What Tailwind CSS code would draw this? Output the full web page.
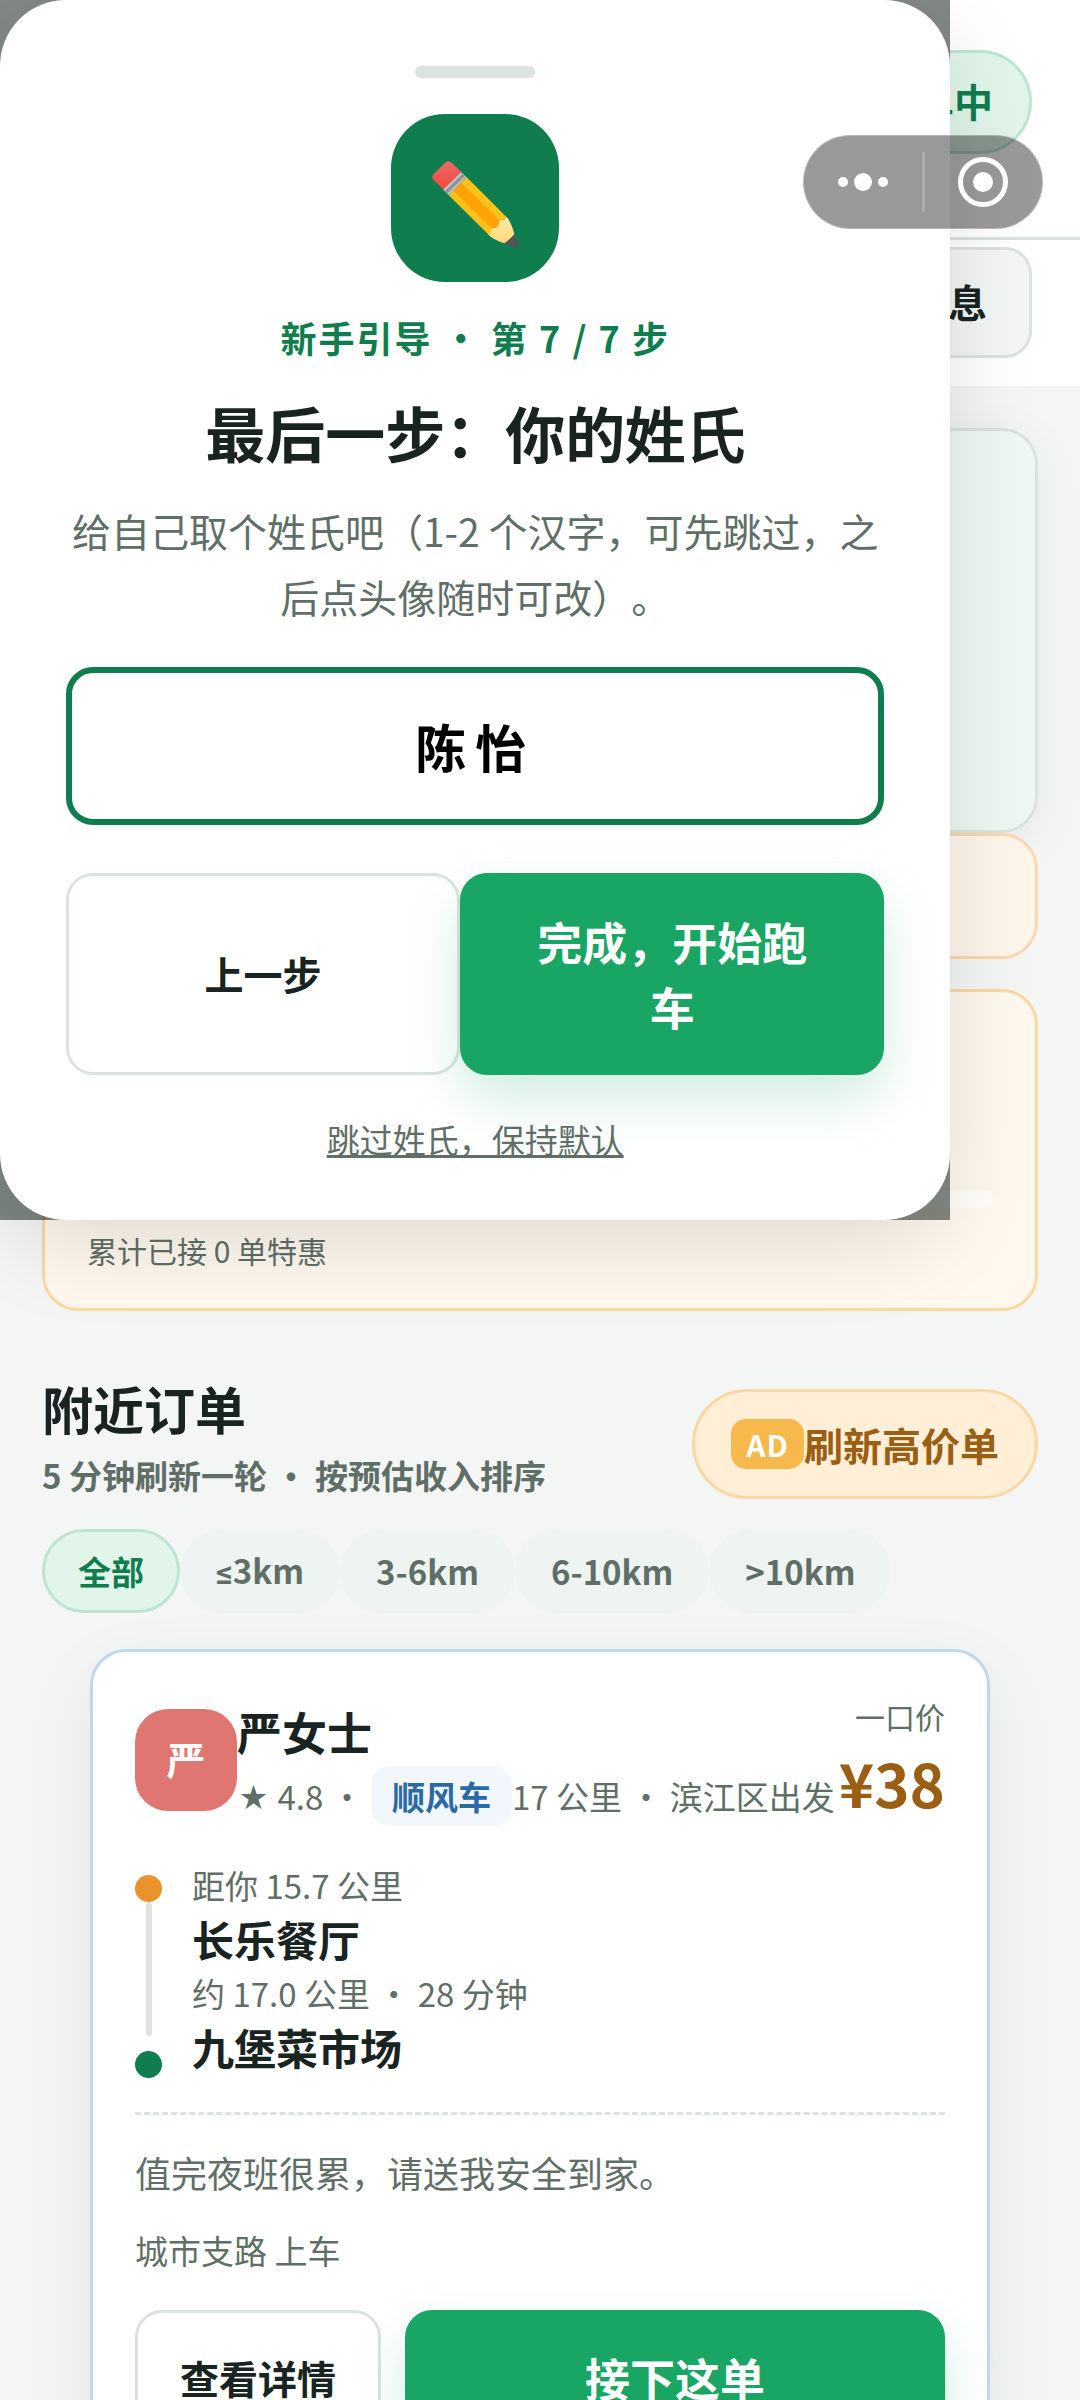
<!DOCTYPE html>
<html lang="zh-CN">
<head>
<meta charset="utf-8">
<meta name="viewport" content="width=device-width, initial-scale=1">
<title>附近订单</title>
<script src="https://cdn.jsdelivr.net/npm/@tailwindcss/browser@4"></script>
</head>
<body class="bg-[#f4f6f5] font-['Noto_Sans_CJK_SC',sans-serif] text-[#182322] [text-spacing-trim:space-all]">
<div class="relative h-screen overflow-hidden">

  <header class="flex h-60 items-start justify-end border-b-3 border-[#dbe3df] bg-white px-12 pt-[50px]">
    <button class="h-[104px] rounded-full border-3 border-[#bfe5d2] bg-[#e1f5ea] px-9 pb-1 text-[39px] leading-[56px] font-bold text-[#0f7d4d]">接单中</button>
  </header>
  <nav class="flex justify-end bg-white px-12 pt-[7px] pb-7">
    <button class="h-[111px] rounded-[27px] border-3 border-[#dbe3df] bg-[#f4f6f5] px-[42px] pb-1 text-[39px] leading-[56px] font-bold">消息</button>
  </nav>

  <main class="px-[42px] pt-[42px]">
    <section class="h-[405px] rounded-[36px] border-3 border-[#d9e4df] bg-linear-to-r from-[#e1f5ea] to-[#eff7f3] shadow-[0_12px_54px_rgba(24,35,34,0.06)]"></section>
    <section class="h-[126px] rounded-[36px] border-3 border-[#fad8b0] bg-[#fff6eb]"></section>
    <section class="mt-[30px] flex h-[322px] flex-col justify-end rounded-[36px] border-3 border-[#fbd9a3] bg-[#fff8ee] px-[42px] pb-9">
      <div class="h-[18px] rounded-full bg-white/70"></div>
      <p class="mt-5 text-[30px] leading-[44px] text-[#5f6f68]">累计已接 0 单特惠</p>
    </section>

    <div class="mt-16 flex items-end justify-between">
      <div>
        <h2 class="text-[51px] leading-[66px] font-bold">附近订单</h2>
        <p class="mt-2.5 text-[33px] leading-[48px] font-bold text-[#5f6f68]">5 分钟刷新一轮 · 按预估收入排序</p>
      </div>
      <button class="flex h-[110px] items-center rounded-full border-3 border-[#fbd7a4] bg-[#ffefd6] px-9 text-[39px] leading-[56px] font-bold text-[#9b5f13]">
        <span class="flex h-[50px] items-center rounded-[15px] bg-[#f7b84c] px-[15px] text-[30px] leading-[44px] tracking-[1px] text-white">AD</span>刷新高价单
      </button>
    </div>

    <div class="mt-[30px] flex text-[33px] leading-[48px] font-bold text-[#5f6f68]">
      <button class="h-[84px] rounded-full border-3 border-[#bfe5d2] bg-[#e1f5ea] px-[33px] text-[#0f7d4d]">全部</button>
      <button class="h-[84px] rounded-full bg-[#edf4f2] px-9"><span class="font-[Roboto]">≤</span>3km</button>
      <button class="h-[84px] rounded-full bg-[#edf4f2] px-9">3-6km</button>
      <button class="h-[84px] rounded-full bg-[#edf4f2] px-9">6-10km</button>
      <button class="h-[84px] rounded-full bg-[#edf4f2] px-9">&gt;10km</button>
    </div>

    <article class="mx-12 mt-9 rounded-[36px] border-3 border-[#bfd8ee] bg-white px-[42px] pt-[42px] pb-[42px] shadow-[0_24px_72px_rgba(24,35,34,0.07)]">
      <div class="flex items-center justify-between">
        <div class="flex items-center whitespace-nowrap">
          <div class="grid size-[102px] shrink-0 place-items-center rounded-[33px] bg-[#df7672] pb-1 text-[39px] leading-[56px] font-bold text-white">严</div>
          <div class="pt-2">
            <h3 class="text-[45px] leading-[60px] font-bold">严女士</h3>
            <p class="mt-1 flex h-[60px] items-center text-[33px] leading-[48px] text-[#5f6f68]"><span class="w-[33px] text-center text-[27px]">★</span><span class="whitespace-pre"> 4.8 · </span><span class="rounded-[18px] bg-[#f2f7fe] px-[21px] py-1.5 font-bold text-[#2b6aa5]">顺风车</span>17 公里 · 滨江区出发</p>
          </div>
        </div>
        <div class="text-right">
          <p class="text-[30px] leading-[44px] text-[#5f6f68]">一口价</p>
          <p class="text-[60px] leading-[88px] font-bold text-[#9b5f13]">¥38</p>
        </div>
      </div>

      <div class="mt-8 flex gap-[30px]">
        <div class="flex w-[27px] flex-col items-center pt-[17px]">
          <span class="size-[27px] rounded-full bg-[#e9932a]"></span>
          <span class="h-[134px] w-1.5 rounded-full bg-[#dbe4df]"></span>
          <span class="mt-[15px] size-[27px] rounded-full bg-[#0f7d4d]"></span>
        </div>
        <div class="leading-[54px] text-[33px] text-[#5f6f68]">
          <p>距你 15.7 公里</p>
          <p class="text-[42px] font-bold text-[#182322]">长乐餐厅</p>
          <p>约 17.0 公里 · 28 分钟</p>
          <p class="text-[42px] font-bold text-[#182322]">九堡菜市场</p>
        </div>
      </div>

      <div class="mt-[34px] border-t-3 border-dashed border-[#dbe3df] pt-[30px] text-[#5f6f68]">
        <p class="text-[36px] leading-[54px]">值完夜班很累，请送我安全到家。</p>
        <p class="mt-[27px] text-[33px] leading-[48px]">城市支路 上车</p>
      </div>
      <div class="mt-9 flex gap-6">
        <button class="h-[134px] rounded-[27px] border-3 border-[#dbe3df] px-[42px] text-[39px] leading-[56px] font-bold">查看详情</button>
        <button class="h-[134px] flex-1 rounded-[27px] bg-[#19a563] text-[45px] leading-[65px] font-bold text-white shadow-[0_24px_54px_rgba(24,165,99,0.2)]">接下这单</button>
      </div>
    </article>
  </main>

  <div class="absolute top-0 left-0 w-[88%] bg-[#0f1c16]/52">
    <div role="dialog" aria-labelledby="guide-title" class="flex flex-col items-center rounded-[66px] bg-white px-[66px] pt-[66px] pb-[55px] text-center shadow-[0_24px_90px_rgba(0,0,0,0.12)]">
      <div class="h-3 w-[120px] rounded-full bg-[#dbe3df]"></div>
      <div class="mt-9 grid size-[168px] place-items-center rounded-[54px] bg-[#0f7d4d] pt-3">
        <svg class="size-[87px]" viewBox="215 362 261 262" aria-hidden="true">
          <defs>
            <linearGradient id="rubber" x1="0" y1="0" x2="0" y2="1"><stop offset="0" stop-color="#e86a68"/><stop offset="1" stop-color="#f4463c"/></linearGradient>
            <linearGradient id="wood" x1="0" y1="0" x2="0" y2="1"><stop offset="0" stop-color="#ffe9a8"/><stop offset="1" stop-color="#ffdb78"/></linearGradient>
          </defs>
          <path fill="url(#rubber)" d="M249 448 219 419Q212 411 219 402L253 368Q264 358 275 368L303 395Z"/>
          <path fill="#bdbdbd" d="M302 395 319 411 265 465 248 448Z"/>
          <path fill="#8f8f8f" d="M307 401 313 407 260 459 254 453Z"/>
          <path fill="#ffc11a" d="M319 411 438 530 386 585 265 465Z"/>
          <path fill="#ffa308" d="M303 427 425 548 402 572 278 451Z"/>
          <path fill="url(#wood)" d="M438 530Q451 540 463 583L434 610Q398 599 384 583L393 575 393 564Q407 567 415 556L417 543 430 540Z"/>
          <path fill="#ffa308" d="M400 555 417 540Q417 561 397 563Z"/>
          <path fill="#555" d="M463 582 475 614Q474 624 462 622L433 609Q448 603 463 582Z"/>
        </svg>
      </div>
      <p class="mt-7 text-[36px] leading-[54px] font-bold tracking-[2px] text-[#0f7d4d]">新手引导 · 第 7 / 7 步</p>
      <h1 id="guide-title" class="mt-[26px] text-[60px] leading-[84px] font-bold">最后一步：你的<span class="font-normal [-webkit-text-stroke:2px_#182322]">姓氏</span></h1>
      <p class="mt-[23px] text-[39px] leading-[66px] text-[#5f6f68]">给自己取个姓氏吧（1-2 个汉字，可先跳过，之后点头像随时可改）。</p>
      <input aria-label="姓氏" value="陈怡" class="mt-[38px] h-[158px] w-full rounded-[27px] border-6 border-[#0f7d4d] bg-white text-center text-[51px] font-bold tracking-[9px] text-black outline-none">
      <div class="mt-12 grid w-full grid-cols-[394fr_424fr]">
        <button class="rounded-[27px] border-3 border-[#dbe3df] pb-0.5 text-[39px] leading-[56px] font-bold">上一步</button>
        <button class="rounded-[27px] bg-[#19a563] px-[60px] py-9 text-[45px] leading-[65px] font-bold text-white shadow-[0_24px_54px_rgba(24,165,99,0.2)]">完成，开始跑车</button>
      </div>
      <a href="#" class="mt-[39px] mb-px text-[33px] leading-[50px] text-[#5f6f68] underline">跳过姓氏，保持默认</a>
    </div>
  </div>

  <div class="absolute top-[135px] right-[37px] flex h-[94px] w-60 items-center rounded-full border border-white/30 bg-black/40">
    <button aria-label="更多" class="flex flex-1 items-center justify-center gap-1.5">
      <span class="size-2.5 rounded-full bg-white"></span>
      <span class="size-[18px] rounded-full bg-white"></span>
      <span class="size-2.5 rounded-full bg-white"></span>
    </button>
    <span class="h-[60px] w-[3px] bg-white/20"></span>
    <button aria-label="关闭" class="grid flex-1 place-items-center">
      <span class="grid size-[50px] place-items-center rounded-full border-5 border-white"><span class="size-5 rounded-full bg-white"></span></span>
    </button>
  </div>
</div>
</body>
</html>
